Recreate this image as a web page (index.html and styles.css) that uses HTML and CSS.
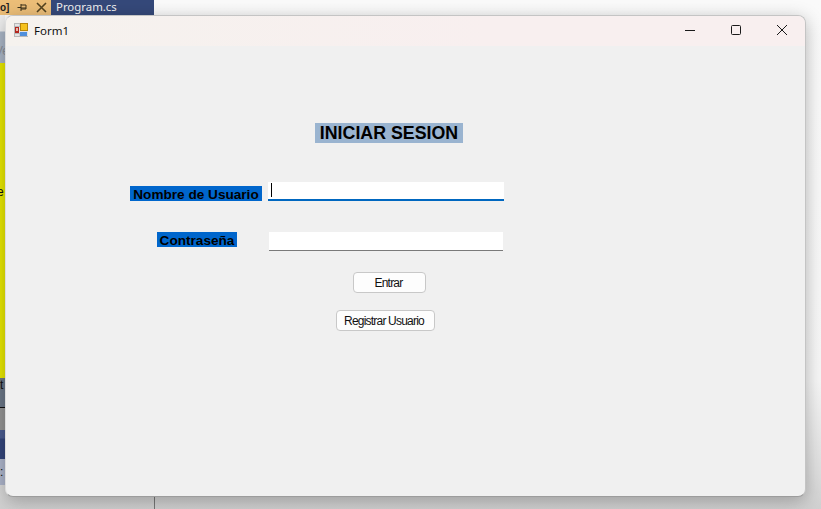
FILE: index.html
```html
<!DOCTYPE html>
<html lang="en">
<head>
    <meta charset="UTF-8">
    <meta name="viewport" content="width=device-width, initial-scale=1.0">
    <title>Form1</title>
    <link rel="stylesheet" href="styles.css">
</head>
<body>
    <!-- IDE behind the form -->
    <div class="ide">
        <div class="ide-tabs">
            <div class="tab-active">
                <span class="tab-clip">o]</span>
                <svg class="tab-pin" width="11" height="11" viewBox="0 0 11 11"><path d="M0.5 5.5h3.5M4 2v7M4 3h5v4H4M4 6h5" fill="none" stroke="#3a3019"/></svg>
                <svg class="tab-close" width="11" height="11" viewBox="0 0 11 11"><path d="M1 1l9 9M10 1L1 10" fill="none" stroke="#54431f" stroke-width="1.6"/></svg>
            </div>
            <div class="tab-file">Program.cs</div>
        </div>
        <div class="ide-strip">
            <div class="strip-grey"><span class="frag frag-ve">Ve</span></div>
            <div class="strip-yellow"><span class="frag frag-e">e</span></div>
            <div class="strip-slate"><span class="frag frag-t">t</span></div>
            <div class="strip-grey2"></div>
            <div class="strip-navy"></div>
            <div class="strip-light"><span class="frag frag-colon">:</span></div>
        </div>
        <div class="ide-divider"></div>
    </div>

    <div class="window">
        <div class="titlebar">
            <svg class="app-icon" width="14" height="14" viewBox="0 0 14 14">
                <rect x="0" y="0" width="14" height="14" fill="#e4e4e4"/>
                <path d="M0.5 0v14M6 0v4M0 0.5h6M0 3.5h6M0 10.5h6M0 13.5h14M6 10v4" stroke="#b8b8b8" fill="none"/>
                <rect x="1" y="4" width="4" height="6" fill="#b3261e"/>
                <rect x="2" y="5" width="2" height="3" fill="#e8b8a8"/>
                <rect x="6.5" y="0.5" width="7" height="7" fill="#f6c21c" stroke="#b8860b"/>
                <rect x="6" y="9" width="7" height="4" fill="#4f8fdc"/>
            </svg>
            <span class="title">Form1</span>
            <div class="caption-buttons">
                <svg class="caption" width="12" height="12" viewBox="0 0 12 12"><path d="M1 6.5h10" stroke="#1a1a1a" fill="none"/></svg>
                <svg class="caption" width="12" height="12" viewBox="0 0 12 12"><rect x="1.5" y="1.5" width="9" height="9" rx="1" stroke="#1a1a1a" fill="none"/></svg>
                <svg class="caption" width="12" height="12" viewBox="0 0 12 12"><path d="M1 1l10 10M11 1L1 11" stroke="#1a1a1a" fill="none"/></svg>
            </div>
        </div>
        <div class="form">
            <h1 class="heading">INICIAR SESION</h1>
            <div class="row row-user">
                <label class="label label-user">Nombre de Usuario</label>
                <div class="field field-focus"><span class="caret"></span></div>
            </div>
            <div class="row row-pass">
                <label class="label label-pass">Contraseña</label>
                <div class="field"></div>
            </div>
            <button class="btn btn-enter">Entrar</button>
            <button class="btn btn-register">Registrar Usuario</button>
        </div>
    </div>
</body>
</html>
```

FILE: styles.css
```css
html, body {
    margin: 0;
    height: 100%;
}

body {
    width: 821px;
    height: 509px;
    position: relative;
    overflow: hidden;
    background: #e6e6e6;
    font-family: "Liberation Sans", Arial, sans-serif;
}

.ide {
    position: absolute;
    inset: 0;
    background: linear-gradient(to bottom, #fafafa 0, #f6f6f6 380px, #dcdcdc 480px, #d0d0d0 509px);
}

.ide-tabs {
    display: flex;
    height: 15px;
}

.tab-active {
    width: 51px;
    background: #ecbe78;
    display: flex;
    align-items: center;
    font-size: 10px;
    font-weight: bold;
    color: #222;
    overflow: hidden;
}

.tab-clip {
    width: 17px;
    flex: none;
}

.tab-pin {
    flex: none;
}

.tab-close {
    flex: none;
    margin-left: 8px;
}

.tab-file {
    width: 103px;
    background: #35497a;
    color: #f0f0f0;
    font-family: "Noto Sans", sans-serif;
    font-size: 11.4px;
    line-height: 13px;
    padding-left: 5px;
    box-sizing: border-box;
}

.ide-strip {
    position: absolute;
    left: 0;
    top: 15px;
    width: 5px;
    display: flex;
    flex-direction: column;
    overflow: hidden;
    font-size: 12px;
    line-height: 14px;
    color: #111;
}

.strip-grey { height: 48px; background: linear-gradient(to bottom, #eeeeee 0, #eeeeee 16px, #aab6c6 17px); position: relative; }
.strip-yellow { height: 315px; background: #e9e900; position: relative; }
.strip-slate { height: 29px; background: #6b7787; border-bottom: 1px solid #111; position: relative; }
.strip-grey2 { height: 22px; background: #949494; }
.strip-navy { height: 29px; background: linear-gradient(to bottom, #4a5c90 0, #4a5c90 8px, #34467c 9px); }
.strip-light { height: 26px; background: #aeb6cc; position: relative; }

/* text cut off by the form on top of it */
.frag {
    position: absolute;
    left: -3px;
}

.frag-ve { top: 29px; left: -5px; color: #8a8f96; }
.frag-e { top: 122px; }
.frag-t { top: 0; left: 0; }
.frag-colon { top: 6px; left: 0; }

.ide-divider {
    position: absolute;
    left: 154px;
    top: 490px;
    width: 1px;
    height: 19px;
    background: #777;
}

.window {
    position: absolute;
    left: 5px;
    top: 15px;
    width: 801px;
    height: 482px;
    box-sizing: border-box;
    background: #f0f0f0;
    border: 1px solid #c4c4c4;
    border-left-color: #dddddd;
    border-bottom-color: #9c9c9c;
    border-radius: 8px;
    box-shadow: 0 4px 18px rgba(0, 0, 0, 0.28);
    overflow: hidden;
}

.titlebar {
    height: 30px;
    box-sizing: border-box;
    padding: 0 0 2px 8px;
    background: linear-gradient(to right, #f5f2ee, #f8efef 60%);
    display: flex;
    align-items: center;
}

.app-icon {
    flex: none;
}

.title {
    margin-left: 6px;
    font-family: "Noto Sans", sans-serif;
    font-size: 11.5px;
    color: #111;
}

.caption-buttons {
    margin-left: auto;
    display: flex;
    gap: 34px;
    padding-right: 17px;
}

.form {
    position: relative;
    height: 450px;
}

.heading {
    position: absolute;
    left: 309px;
    top: 77px;
    margin: 0;
    box-sizing: border-box;
    width: 148px;
    height: 20px;
    line-height: 20px;
    text-align: center;
    white-space: nowrap;
    background: #9ab4d0;
    font-size: 17.8px;
    font-weight: bold;
    color: #000;
}

.label {
    position: absolute;
    height: 15px;
    line-height: 17px;
    background: #0066cc;
    color: #000;
    font-size: 13.6px;
    font-weight: bold;
    text-align: center;
    white-space: nowrap;
}

.label-user {
    left: 124px;
    top: 140px;
    width: 132px;
}

.label-pass {
    left: 151px;
    top: 186px;
    width: 80px;
}

.field {
    position: absolute;
    background: #fff;
}

.row-user .field {
    left: 262px;
    top: 136px;
    width: 236px;
    height: 17px;
    border-bottom: 2px solid #0067c0;
}

.row-pass .field {
    left: 263px;
    top: 186px;
    width: 234px;
    height: 18px;
    border-bottom: 1px solid #7a7a7a;
}

.caret {
    position: absolute;
    left: 3px;
    top: 1px;
    width: 1px;
    height: 14px;
    background: #000;
}

.btn {
    position: absolute;
    height: 21px;
    padding: 0;
    box-sizing: border-box;
    background: #fdfdfd;
    border: 1px solid #c8c8c8;
    border-radius: 4px;
    font-family: "Liberation Sans", Arial, sans-serif;
    font-size: 12px;
    letter-spacing: -0.8px;
    color: #111;
}

.btn-enter {
    left: 347px;
    top: 226px;
    width: 73px;
    padding-right: 2px;
}

.btn-register {
    left: 330px;
    top: 264px;
    width: 99px;
    padding-right: 3px;
}
```
